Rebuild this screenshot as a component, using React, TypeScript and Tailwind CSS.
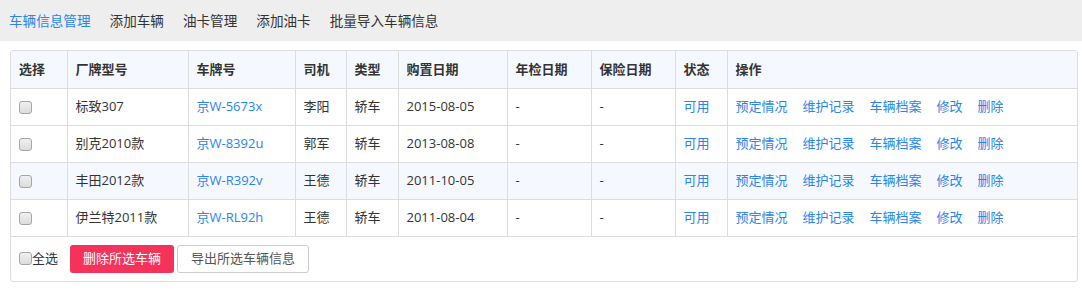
import React from "react";

interface Car {
  brand: string;
  plate: string;
  driver: string;
  type: string;
  buyDate: string;
  checkDate: string;
  insureDate: string;
  status: string;
}

const cars: Car[] = [
  { brand: "标致307", plate: "京W-5673x", driver: "李阳", type: "轿车", buyDate: "2015-08-05", checkDate: "-", insureDate: "-", status: "可用" },
  { brand: "别克2010款", plate: "京W-8392u", driver: "郭军", type: "轿车", buyDate: "2013-08-08", checkDate: "-", insureDate: "-", status: "可用" },
  { brand: "丰田2012款", plate: "京W-R392v", driver: "王德", type: "轿车", buyDate: "2011-10-05", checkDate: "-", insureDate: "-", status: "可用" },
  { brand: "伊兰特2011款", plate: "京W-RL92h", driver: "王德", type: "轿车", buyDate: "2011-08-04", checkDate: "-", insureDate: "-", status: "可用" },
];

const navItems = ["车辆信息管理", "添加车辆", "油卡管理", "添加油卡", "批量导入车辆信息"];
const actions = ["预定情况", "维护记录", "车辆档案", "修改", "删除"];
const headers = ["选择", "厂牌型号", "车牌号", "司机", "类型", "购置日期", "年检日期", "保险日期", "状态", "操作"];
const widths = [56, 121, 107, 51, 52, 109, 84, 84, 52, 350];

const Checkbox = () => (
  <input
    type="checkbox"
    className="appearance-none w-[13px] h-[13px] rounded-[3px] border border-[#a6a6a6] bg-gradient-to-b from-[#f0f0f0] to-[#dcdcdc] align-middle m-0"
  />
);

const App = () => {
  const [active] = React.useState(0);

  return (
    <div className="w-[1082px] h-[294px] bg-white text-[13px] text-[#333] font-['Open_Sans','Noto_Sans_CJK_SC',sans-serif]">
      <div className="h-[41px] bg-[#eeeeee] flex items-center pl-[9px] gap-[19px]">
        {navItems.map((item, i) => (
          <span
            key={item}
            className={`text-[13.6px] leading-[41px] ${i === active ? "text-[#2a85e8]" : "text-[#333]"}`}
          >
            {item}
          </span>
        ))}
      </div>

      <div className="ml-[10px] mr-[4px] mt-[9px] border border-[#dddddd] rounded-[3px] overflow-hidden">
        <table className="w-full table-fixed border-collapse">
          <colgroup>
            {widths.map((w, i) => (
              <col key={i} style={{ width: w }} />
            ))}
          </colgroup>
          <thead>
            <tr className="bg-[#f5f9ff] h-[37px]">
              {headers.map((h, i) => (
                <th
                  key={h}
                  className={`text-left font-bold px-[8px] border-b border-[#dddddd] ${i < headers.length - 1 ? "border-r" : ""}`}
                >
                  {h}
                </th>
              ))}
            </tr>
          </thead>
          <tbody>
            {cars.map((car, idx) => (
              <tr key={car.plate} className={`h-[37px] ${idx === 2 ? "bg-[#f5f9ff]" : ""}`}>
                <td className="px-[8px] border-b border-r border-[#dddddd]">
                  <Checkbox />
                </td>
                <td className="px-[8px] border-b border-r border-[#dddddd]">{car.brand}</td>
                <td className="px-[8px] border-b border-r border-[#dddddd] text-[#2a85e8]">{car.plate}</td>
                <td className="px-[8px] border-b border-r border-[#dddddd]">{car.driver}</td>
                <td className="px-[8px] border-b border-r border-[#dddddd]">{car.type}</td>
                <td className="px-[8px] border-b border-r border-[#dddddd]">{car.buyDate}</td>
                <td className="px-[8px] border-b border-r border-[#dddddd]">{car.checkDate}</td>
                <td className="px-[8px] border-b border-r border-[#dddddd]">{car.insureDate}</td>
                <td className="px-[8px] border-b border-r border-[#dddddd] text-[#2a85e8]">{car.status}</td>
                <td className="px-[8px] border-b border-[#dddddd] whitespace-nowrap">
                  {actions.map((a) => (
                    <a key={a} className="text-[#2a85e8] mr-[15px] cursor-pointer">
                      {a}
                    </a>
                  ))}
                </td>
              </tr>
            ))}
          </tbody>
        </table>

        <div className="h-[44px] flex items-center pl-[8px]">
          <label className="flex items-center">
            <Checkbox />
            <span className="text-[#333]">全选</span>
          </label>
          <button className="ml-[12px] h-[28px] px-[13px] rounded-[3px] bg-[#f5325a] text-white">
            删除所选车辆
          </button>
          <button className="ml-[3px] h-[28px] px-[13px] rounded-[3px] border border-[#cccccc] bg-white text-[#555]">
            导出所选车辆信息
          </button>
        </div>
      </div>
    </div>
  );
};

export default App;
